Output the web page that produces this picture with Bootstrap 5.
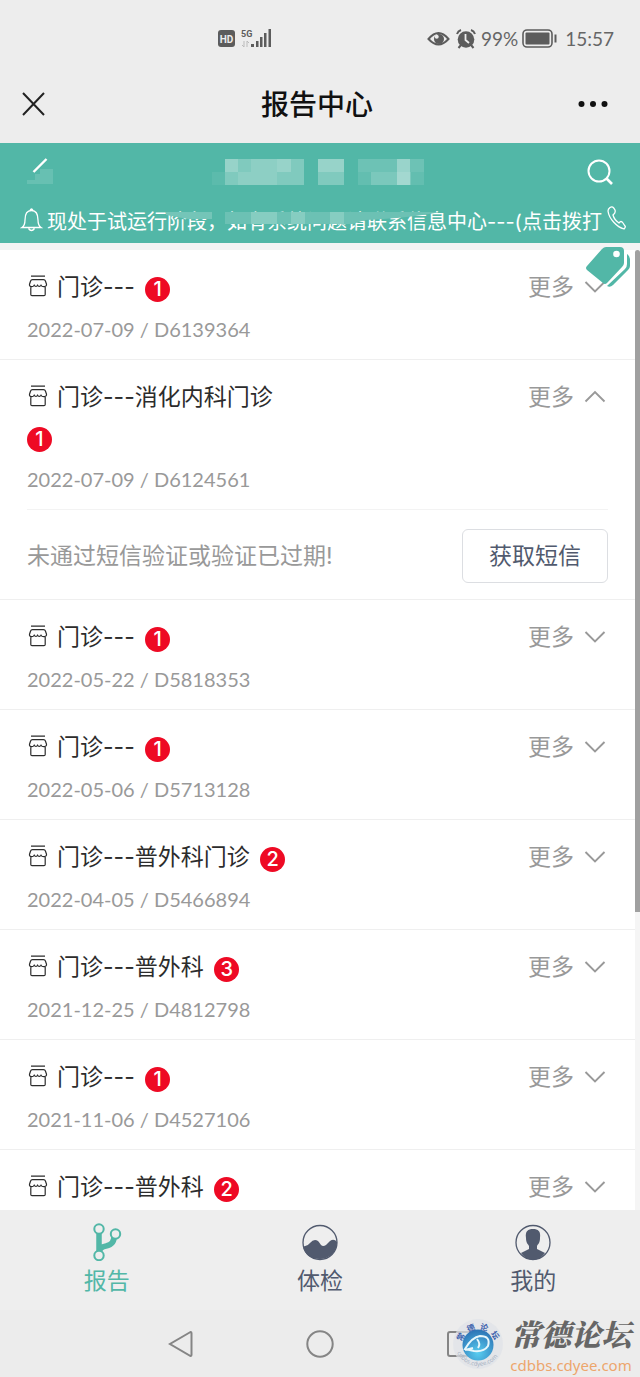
<!DOCTYPE html>
<html lang="zh-CN">
<head>
<meta charset="utf-8">
<meta name="viewport" content="width=device-width, initial-scale=1">
<title>报告中心</title>
<link href="https://cdn.jsdelivr.net/npm/bootstrap@5.3.0/dist/css/bootstrap.min.css" rel="stylesheet">
<style>
  :root { --teal: #52b7a7; --bar: #ededed; --ink: #2c2c2c; --muted: #999; --navy: #515a6e; }
  body { font-family: Inter, "Noto Sans CJK SC", sans-serif; background: var(--bar); color: var(--ink); }
  svg { display: block; flex: none; }
  button { font-family: inherit; }
  .plain { background: none; border: 0; padding: 0; color: inherit; }
  .status { height: 78px; font: 400 19px/24px Lato, sans-serif; color: #666; padding: 0 26px 0 218px; }
  .titlebar { height: 65px; padding: 0 32px 14px 22px; color: #111; }
  .titlebar h1 { font-size: 28px; line-height: 36px; font-weight: 500; padding: 2px 0 0 10px; }
  .apphead { background: var(--teal); color: #fff; height: 100px; padding: 0 14px 0 20px; }
  .apphead .navrow { height: 58px; padding: 0 12px 0 6px; }
  .apphead .notice { height: 42px; font-size: 20px; line-height: 28px; }
  .veil { left: 160px; top: 67px; }
  .listwrap { background: #f3f4f4; padding-top: 7px; }
  .visit { background: #fff; border-bottom: 1px solid #efefef; padding: 0 27px; }
  .visit .summary { padding: 17px 0; }
  .visit .name { max-width: 272px; font-size: 23px; line-height: 40px; font-weight: 400; }
  .visit .name svg { display: inline-block; vertical-align: -2px; margin-right: 8px; }
  .visit .name .label { margin-right: 4px; }
  .visit .cnt { display: inline-block; width: 25px; height: 25px; line-height: 25px; font-size: 20px; font-weight: 500; text-align: center; color: #fff; background: #ee0a24; vertical-align: -1px; }
  .visit .when { font: 400 20px/26px Lato, sans-serif; height: 26px; color: var(--muted); margin-top: 9px; }
  .visit .more { font-size: 23px; line-height: 40px; font-weight: 400; color: var(--muted); gap: 10px; padding-right: 2px; }
  .visit .verify { border-top: 1px solid #f3f3f3; font-size: 23px; color: var(--muted); padding: 19px 0 16px; }
  .btn-sms { --bs-btn-color: #515a6e; --bs-btn-border-color: #dcdee2; --bs-btn-border-radius: 6px; font-size: 23px; line-height: 34px; padding: 9px 26px; }
  .tag-float { right: 9px; top: 2px; z-index: 2; }
  .track { width: 5px; background: #f5f5f5; }
  .thumb { height: 69%; background: #a0a0a0; border-radius: 3px 3px 0 0; }
  .tabs { height: 100px; background: #eee; color: var(--navy); font-size: 23px; line-height: 32px; padding-top: 13px; }
  .tabs a { color: inherit; text-decoration: none; gap: 4px; }
  .tabs a.active { color: var(--teal); }
  .sysnav { height: 67px; background: #ececec; padding: 0 166px; color: #858585; }
  .brand { right: 6px; bottom: 1px; gap: 4px; }
  .brand strong { font: italic 900 30px/44px "Noto Serif CJK SC", "Noto Sans CJK SC", serif; color: #666; }
  .brand span { font: 400 15px/21px "Noto Sans", sans-serif; color: #eda66c; }
  .brand .sign { width: 126px; }
</style>
</head>
<body>
<svg width="0" height="0" class="position-absolute">
  <defs>
    <symbol id="shop" viewBox="0 0 20 22"><g fill="none" stroke="currentColor" stroke-width="1.200"><path d="M3 1.200h14M4.500 4.700h11q1.500 0 2 1.500l1 3c.6 3-4.300 3.200-5.500 1-1 1.700-2.600 1.500-3.400 0-.8 1.500-2.400 1.700-3.400 0C5 12.400.900 12.200 1.500 9.200l1-3q.5-1.500 2-1.500zM2.800 12v7.500q0 1.200 1.200 1.200h12q1.200 0 1.200-1.200V12"/></g></symbol>
    <symbol id="down" viewBox="0 0 22 14"><path d="M1.500 2 11 11.500 20.500 2" fill="none" stroke="currentColor" stroke-width="1.900"/></symbol>
    <symbol id="up" viewBox="0 0 22 14"><path d="M1.500 11.500 11 2l9.500 9.500" fill="none" stroke="currentColor" stroke-width="1.900"/></symbol>
  </defs>
</svg>

<div class="vh-100 d-flex flex-column position-relative overflow-hidden">
  <div class="status d-flex align-items-center justify-content-between flex-shrink-0">
    <svg width="54" height="20" viewBox="0 0 54 20" fill="#5c5c5c">
      <rect y="1" width="17" height="17" rx="3"/>
      <text x="8.500" y="13.500" font-family="Roboto" font-size="10" font-weight="700" text-anchor="middle" fill="#ededed">HD</text>
      <text x="23" y="8" font-family="Roboto" font-size="9" font-weight="700">5G</text>
      <path d="M26 12v6m-2-2 2 2M29 18v-6m0 0 2 2" stroke="#bbb" fill="none"/>
      <path d="M33 15h3v3h-3zM38 12h2.500v6H38zM42 8h2.500v10H42zM46 4h2.500v14H46zM50.500 0H53v18h-2.500z"/>
    </svg>
    <div class="d-flex align-items-center">
      <svg width="50" height="22" viewBox="0 0 50 22" fill="none" stroke="#5c5c5c" stroke-width="2">
        <path d="M1.500 11Q11.500-1 21.500 11 11.500 22 1.500 11z"/><circle cx="12" cy="11" r="5" fill="#5c5c5c" stroke="none"/><circle cx="9.700" cy="8.800" r="2" fill="#ededed" stroke="none"/>
        <circle cx="39" cy="11.500" r="8.300" fill="#5c5c5c" stroke="none"/><path d="M30 6q1-3 4-4M44 2q3 1 4 4M34 17l-2.500 3M44 17l2.500 3"/><path d="M38.500 6v6l3.500 3" stroke="#ededed" stroke-width="1.800"/>
      </svg>
      <span class="ms-1">99%</span>
      <svg class="ms-1 me-2" width="35" height="20" viewBox="0 0 35 20"><rect x="1" y="1" width="29" height="17" rx="4" fill="none" stroke="#5c5c5c" stroke-width="1.600"/><rect x="3.500" y="3.500" width="24" height="12" rx="1" fill="#5c5c5c"/><path d="M33.500 5.500v8" stroke="#5c5c5c" stroke-width="2"/></svg>
      <span>15:57</span>
    </div>
  </div>

  <header class="titlebar d-flex align-items-center justify-content-between flex-shrink-0">
    <button class="plain" aria-label="关闭"><svg width="24" height="26" viewBox="0 0 24 26"><path d="M1 2l21 22M22 2 1 24" stroke="#222" stroke-width="2" fill="none"/></svg></button>
    <h1 class="m-0">报告中心</h1>
    <button class="plain" aria-label="菜单"><svg width="30" height="8" viewBox="0 0 30 8" fill="#111"><circle cx="3.500" cy="4" r="3"/><circle cx="15" cy="4" r="3"/><circle cx="26.500" cy="4" r="3"/></svg></button>
  </header>

  <div class="apphead position-relative flex-shrink-0">
    <div class="navrow d-flex align-items-center justify-content-between">
      <button class="plain" aria-label="返回"><svg width="28" height="30" viewBox="0 0 28 30"><path d="M14 12h13v15H1v-4h8v-6h5z" fill="#67c0b2"/><path d="M20.500 2 7.500 15" stroke="#fff" stroke-width="2.400" fill="none"/></svg></button>
      <svg class="ms-1" width="220" height="27" viewBox="0 0 220 27" fill="#fff">
        <path opacity=".06" d="M0 13h13v13H0z"/><path opacity=".27" d="M13 0h79v26H13zM106 0h26v26h-26z"/><path opacity=".18" d="M13 0h13v13H13zM65 0h14v13H65zM106 0h26v13h-26z"/><path opacity=".1" d="M39 0h26v26H39zM26 13h13v13H26z"/><path opacity=".16" d="M146 0h66v13h-66zM159 0h40v26h-40z"/><path opacity=".1" d="M146 13h66v13h-66z"/><path opacity=".3" d="M185 0h13v26h-13z"/>
      </svg>
      <button class="plain" aria-label="搜索"><svg width="28" height="28" viewBox="0 0 28 28" fill="none" stroke="#fff" stroke-width="2"><circle cx="13" cy="13" r="10.500"/><path d="m20.500 20.500 5.500 5.500" stroke-width="2.600"/></svg></button>
    </div>
    <div class="notice d-flex align-items-center">
      <svg class="mb-1" width="23" height="26" viewBox="0 0 23 26" fill="none" stroke="#fff" stroke-width="1.300"><path d="M2 20.500q3-2 3-7.500c0-6 2-9.500 6.500-9.500S18 7 18 13q0 5.500 3 7.500zM10 3.500q1.500-3 3 0M8.500 21.500q3 4 6 0"/></svg>
      <span class="ms-1 text-nowrap overflow-hidden flex-grow-1">现处于试运行阶段，如有系统问题请联系信息中心---(点击拨打</span>
      <svg class="mb-2" width="19" height="26" viewBox="0 0 19 26" fill="none" stroke="#fff" stroke-width="1.300"><path d="M3 2.500Q6 .500 8 5c1 3-1 4-2 5 1 4 3 6 6 8q2-3 4 0l2 3q1 1-1 3C10 22 2 14 1 6q0-2 2-3.500z"/></svg>
    </div>
    <svg class="veil position-absolute" width="280" height="20" viewBox="0 0 280 20"><path d="M6 2h46v7H28L6 5z" fill="#74c5b8"/><path d="M65 2h215q-30 6-75 8l-12 4H65z" fill="#6cc1b4"/><path d="M91 2h26v12H91zM131 2h14v12h-14zM170 2h14v12h-14z" fill="#86cdc1"/></svg>
  </div>

  <main class="listwrap flex-grow-1 position-relative overflow-hidden d-flex align-items-start">
    <div class="flex-grow-1" id="visits"></div>
    <div class="track align-self-stretch"><div class="thumb"></div></div>
    <button class="plain tag-float position-absolute" aria-label="标签"><svg width="46" height="42" viewBox="0 0 46 42" fill="#52b7a7"><path d="M21 2h14q4 0 4 4v12q0 2-2 4L22 38q-2 2-4 0L2 25q-2-2 0-4L17 4q2-2 4-2zM42 9q3 2 3 5v7q0 2-2 4L28 40q-3 3-6 1l18-17q2-2 2-5z"/><circle cx="31.500" cy="9" r="3.300" fill="#fff"/></svg></button>
  </main>

  <nav class="tabs row g-0 flex-shrink-0 text-center">
    <a href="#" class="col active d-flex flex-column align-items-center"><svg width="38" height="38" viewBox="0 0 38 38"><path d="M11 7v24M26 12q1 9-8 11-6 1-7 6" fill="none" stroke="#52b7a7" stroke-width="5.500"/><g fill="#eee" stroke="#52b7a7" stroke-width="2"><circle cx="11" cy="6" r="4.700"/><circle cx="27.500" cy="11" r="4.700"/><circle cx="11" cy="32.500" r="4.700"/></g></svg>报告</a>
    <a href="#" class="col d-flex flex-column align-items-center"><svg width="38" height="38" viewBox="0 0 38 38"><circle cx="19" cy="19.500" r="17" fill="none" stroke="#515a6e" stroke-width="1.300"/><path d="M2 23q4 1 7-3 4-5 8-2 1 1 3 4 2 2 5 0 2-2 4-4 4-3 7 1v1c0 9-8 16-17 16S3 32 2 23z" fill="#515a6e"/></svg>体检</a>
    <a href="#" class="col d-flex flex-column align-items-center"><svg width="38" height="38" viewBox="0 0 38 38"><circle cx="19" cy="19.500" r="17" fill="none" stroke="#515a6e" stroke-width="1.300"/><path d="M19 6c5 0 8 2 7 9 0 5-2 6-3 8v3l8 4q-5 7-12 7T7 30l8-4v-3c-1-2-3-3-3-8-1-7 2-9 7-9z" fill="#515a6e"/></svg>我的</a>
  </nav>

  <div class="sysnav d-flex align-items-center justify-content-between flex-shrink-0">
    <svg width="28" height="30" viewBox="0 0 28 30"><path d="M24.500 3 4 15l20.500 12q1 0 1-1V4q0-1-1-1z" fill="none" stroke="currentColor" stroke-width="2"/></svg>
    <svg width="30" height="30" viewBox="0 0 30 30"><circle cx="15" cy="15" r="12.700" fill="none" stroke="currentColor" stroke-width="2"/></svg>
    <svg width="28" height="30" viewBox="0 0 28 30"><rect x="2" y="3" width="23" height="24" rx="2" fill="none" stroke="currentColor" stroke-width="2"/></svg>
  </div>

  <div class="brand position-absolute d-flex align-items-center">
    <svg width="52" height="54" viewBox="0 0 52 54">
      <defs><radialGradient id="ball" cx=".5" cy=".75" r=".7"><stop offset="0" stop-color="#58cdf0"/><stop offset="1" stop-color="#2f78b8"/></radialGradient>
      <path id="arcTop" d="M9 30a17.500 17.500 0 0 1 35 0"/><path id="arcLow" d="M2.500 24a24 24 0 0 0 48 2"/></defs>
      <circle cx="26" cy="27" r="25" fill="#dfe3e8" opacity=".7"/>
      <circle cx="26" cy="28" r="15.500" fill="url(#ball)"/>
      <path d="M13 32q7-12 15-13 11 0 8 10-4 6-14 5zM25 22q4 5 1 9M13 33l8-2" fill="none" stroke="#e8f7fc" stroke-width="2"/>
      <text font-family="Noto Sans CJK SC" font-size="8" font-weight="700" fill="#3c62ad"><textPath href="#arcTop" startOffset="5">常&nbsp;&nbsp;德&nbsp;&nbsp;论&nbsp;&nbsp;坛</textPath></text>
      <text font-family="Noto Sans" font-size="6" fill="#a9b4c4"><textPath href="#arcLow" startOffset="12">cdbbs.cdyee.com</textPath></text>
    </svg>
    <div class="sign d-flex flex-column align-items-center text-nowrap"><strong>常德论坛</strong><span>cdbbs.cdyee.com</span></div>
  </div>
</div>

<script>
  const visits = [
    ["门诊---", 1, "2022-07-09 / D6139364"],
    ["门诊---消化内科门诊", 1, "2022-07-09 / D6124561", true],
    ["门诊---", 1, "2022-05-22 / D5818353"],
    ["门诊---", 1, "2022-05-06 / D5713128"],
    ["门诊---普外科门诊", 2, "2022-04-05 / D5466894"],
    ["门诊---普外科", 3, "2021-12-25 / D4812798"],
    ["门诊---", 1, "2021-11-06 / D4527106"],
    ["门诊---普外科", 2, ""]
  ];
  document.getElementById("visits").innerHTML = visits.map(([name, count, when, open]) => `
    <section class="visit">
      <div class="summary d-flex justify-content-between align-items-start">
        <div>
          <h2 class="name m-0"><svg width="22" height="22"><use href="#shop"/></svg><span class="label text-nowrap">${name}</span> <span class="cnt rounded-circle">${count}</span></h2>
          <div class="when">${when}</div>
        </div>
        <button class="plain more d-flex align-items-center">更多<svg width="22" height="14"><use href="#${open ? "up" : "down"}"/></svg></button>
      </div>
      ${open ? `<div class="verify d-flex justify-content-between align-items-center"><span>未通过短信验证或验证已过期!</span><button class="btn btn-sms">获取短信</button></div>` : ""}
    </section>`).join("");
</script>
<script src="https://cdn.jsdelivr.net/npm/bootstrap@5.3.0/dist/js/bootstrap.bundle.min.js"></script>
</body>
</html>
